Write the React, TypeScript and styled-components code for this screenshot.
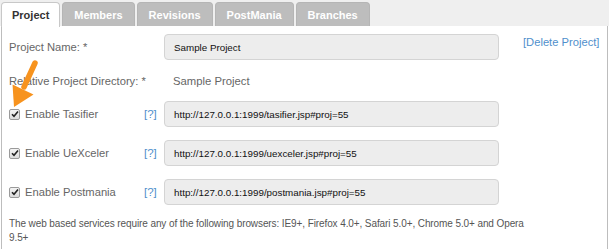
import React from "react";
import styled, { createGlobalStyle } from "styled-components";

const Global = createGlobalStyle`
  html, body { margin: 0; padding: 0; background: #fff; }
  body { font-family: "Liberation Sans", Arial, sans-serif; }
`;

const Page = styled.div`
  width: 609px;
  height: 249px;
  overflow: hidden;
  position: relative;
  background: #fff;
`;

const TabBar = styled.div`
  display: flex;
  align-items: flex-end;
  gap: 2px;
  height: 26px;
  padding-left: 1px;
  background: #efefef;
  box-sizing: border-box;
`;

const Tab = styled.div<{ $active?: boolean; $pad: number }>`
  height: ${(p) => (p.$active ? 25 : 24)}px;
  padding: 0 ${(p) => p.$pad}px;
  display: flex;
  align-items: center;
  font-size: 11px;
  font-weight: bold;
  border-radius: 4px 4px 0 0;
  box-sizing: border-box;
  color: ${(p) => (p.$active ? "#333" : "#fff")};
  background: ${(p) => (p.$active ? "#fff" : "#bdbdbd")};
  border: 1px solid ${(p) => (p.$active ? "#c8c8c8" : "#b5b5b5")};
  border-bottom: none;
  margin-bottom: ${(p) => (p.$active ? -1 : 0)}px;
`;

const Panel = styled.div`
  border-left: 1px solid #bdbdbd;
  border-right: 1px solid #bdbdbd;
  margin-left: 1px;
  margin-right: 1px;
  height: 223px;
  padding: 8px 0 0 7px;
  box-sizing: border-box;
  display: flex;
  flex-direction: column;
`;

const Row = styled.div<{ $h: number; $mt?: number }>`
  display: grid;
  grid-template-columns: 134px 21px 335px 1fr;
  align-items: center;
  height: ${(p) => p.$h}px;
  margin-top: ${(p) => p.$mt ?? 0}px;
  font-size: 11.2px;
  color: #666;
`;

const Label = styled.div<{ $span?: boolean }>`
  display: flex;
  align-items: center;
  gap: 5px;
  grid-column: ${(p) => (p.$span ? "1 / 3" : "auto")};
  white-space: nowrap;
`;

const Help = styled.a`
  color: #4f8fcc;
  text-decoration: none;
  font-size: 11.5px;
  padding-left: 1px;
`;

const Input = styled.div`
  height: 26px;
  box-sizing: border-box;
  background: #ededed;
  border: 1px solid #d4d4d4;
  border-radius: 4px;
  display: flex;
  align-items: center;
  padding-left: 9px;
  font-size: 9.8px;
  color: #111;
  font-weight: 500;
`;

const Value = styled.div`
  padding-left: 9px;
  font-size: 11.3px;
  color: #666;
`;

const DeleteLink = styled.a`
  color: #4f8fcc;
  text-decoration: none;
  font-size: 11.2px;
  align-self: start;
  margin-top: 2px;
  padding-left: 24px;
  white-space: nowrap;
`;

const Check = styled.span`
  width: 11px;
  height: 11px;
  box-sizing: border-box;
  border: 1px solid #9a9a9a;
  border-radius: 2px;
  background: linear-gradient(#f4f4f4, #dcdcdc);
  display: inline-flex;
  align-items: center;
  justify-content: center;
`;

const Footer = styled.div`
  margin-top: 12px;
  font-size: 10px;
  letter-spacing: -0.1px;
  line-height: 14px;
  color: #555;
  width: 520px;
`;

const Arrow = styled.svg`
  position: absolute;
  left: 0;
  top: 55px;
  pointer-events: none;
`;

const tabs = [
  { name: "Project", pad: 10, active: true },
  { name: "Members", pad: 11 },
  { name: "Revisions", pad: 11 },
  { name: "PostMania", pad: 11 },
  { name: "Branches", pad: 11 },
];

const services = [
  { name: "Tasifier", url: "http://127.0.0.1:1999/tasifier.jsp#proj=55", mt: 0 },
  { name: "UeXceler", url: "http://127.0.0.1:1999/uexceler.jsp#proj=55", mt: 13 },
  { name: "Postmania", url: "http://127.0.0.1:1999/postmania.jsp#proj=55", mt: 13 },
];

const CheckMark = () => (
  <Check>
    <svg width="8" height="8" viewBox="0 0 8 8">
      <path d="M1 4.2 L3 6.3 L7 1.5" fill="none" stroke="#222" strokeWidth="1.6" />
    </svg>
  </Check>
);

export default function App() {
  return (
    <Page>
      <Global />
      <TabBar>
        {tabs.map((t) => (
          <Tab key={t.name} $active={t.active} $pad={t.pad}>
            {t.name}
          </Tab>
        ))}
      </TabBar>
      <Panel>
        <Row $h={26}>
          <Label $span>Project Name: *</Label>
          <Input>Sample Project</Input>
          <DeleteLink href="#">[Delete Project]</DeleteLink>
        </Row>
        <Row $h={41}>
          <Label $span>Relative Project Directory: *</Label>
          <Value>Sample Project</Value>
        </Row>
        {services.map((s) => (
          <Row key={s.name} $h={26} $mt={s.mt}>
            <Label>
              <CheckMark />
              Enable {s.name}
            </Label>
            <Help href="#">[?]</Help>
            <Input>{s.url}</Input>
          </Row>
        ))}
        <Footer>
          The web based services require any of the following browsers: IE9+, Firefox 4.0+, Safari 5.0+, Chrome 5.0+ and Opera 9.5+
        </Footer>
      </Panel>
      <Arrow width="45" height="60" viewBox="0 0 45 60">
        <line x1="35" y1="8" x2="24" y2="32" stroke="#f7931e" strokeWidth="5.5" strokeLinecap="round" />
        <polygon points="14,52 12.5,29.5 33.5,39.5" fill="#f7931e" />
      </Arrow>
    </Page>
  );
}
